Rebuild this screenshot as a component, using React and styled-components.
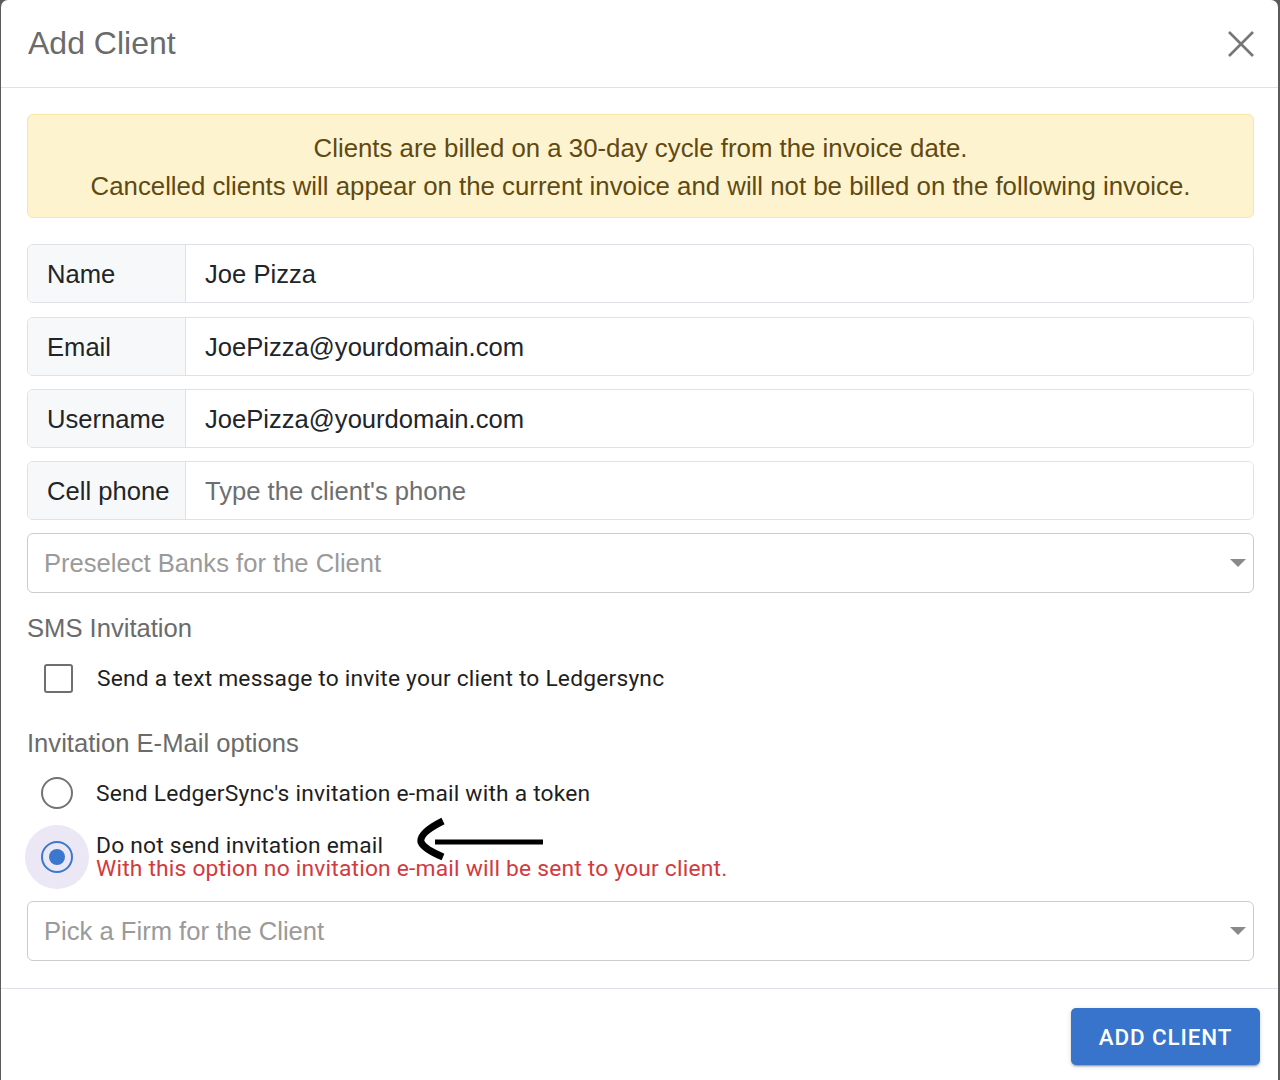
import React from 'react'
import styled, { createGlobalStyle } from 'styled-components'

const GlobalStyle = createGlobalStyle`
  html, body {
    margin: 0;
    padding: 0;
    background: #5b5b5b;
    overflow: hidden;
  }
  * { box-sizing: border-box; }
`

const fields = [
  { label: 'Name', value: 'Joe Pizza' },
  { label: 'Email', value: 'JoePizza@yourdomain.com' },
  { label: 'Username', value: 'JoePizza@yourdomain.com' },
  { label: 'Cell phone', value: '', placeholder: "Type the client's phone" },
]

const CloseIcon = () => (
  <svg width="28" height="28" viewBox="0 0 28 28">
    <path d="M2 2 L26 26 M26 2 L2 26" stroke="#767676" strokeWidth="2.6" fill="none" />
  </svg>
)

const Caret = () => (
  <svg width="16" height="8" viewBox="0 0 16 8">
    <path d="M0 0 H16 L8 8 Z" fill="#8a8a8a" />
  </svg>
)

const Arrow = () => (
  <ArrowSvg width="134" height="46" viewBox="0 0 134 46">
    <path d="M28 5 Q4 17 6 26 Q9 33 28 41" stroke="#000" strokeWidth="7" fill="none" />
    <path d="M20 26 H128" stroke="#000" strokeWidth="5" fill="none" />
  </ArrowSvg>
)

const App = () => {
  return (
    <>
      <GlobalStyle />
      <Modal>
        <Header>
          <Title>Add Client</Title>
          <CloseButton><CloseIcon /></CloseButton>
        </Header>
        <Body>
          <Alert>
            Clients are billed on a 30-day cycle from the invoice date.
            <br />
            Cancelled clients will appear on the current invoice and will not be billed on the following invoice.
          </Alert>
          <Fields>
            {fields.map((f) => (
              <InputGroup key={f.label}>
                <GroupLabel>{f.label}</GroupLabel>
                <GroupInput defaultValue={f.value} placeholder={f.placeholder} />
              </InputGroup>
            ))}
          </Fields>
          <Select $mt={13}>
            <Placeholder>Preselect Banks for the Client</Placeholder>
            <Caret />
          </Select>
          <SectionTitle $mt={20}>SMS Invitation</SectionTitle>
          <CheckRow>
            <CheckBox />
            <CheckLabel>Send a text message to invite your client to Ledgersync</CheckLabel>
          </CheckRow>
          <SectionTitle $mt={31}>Invitation E-Mail options</SectionTitle>
          <Radios>
            <RadioRow>
              <RadioControl>
                <RadioCircle />
              </RadioControl>
              <RadioLabel>Send LedgerSync's invitation e-mail with a token</RadioLabel>
            </RadioRow>
            <RadioRow>
              <RadioControl $focused>
                <RadioCircle $checked />
              </RadioControl>
              <RadioText>
                <RadioLabel>
                  Do not send invitation email
                  <Arrow />
                </RadioLabel>
                <HelperText>With this option no invitation e-mail will be sent to your client.</HelperText>
              </RadioText>
            </RadioRow>
          </Radios>
          <Select $mt={12}>
            <Placeholder>Pick a Firm for the Client</Placeholder>
            <Caret />
          </Select>
        </Body>
        <Footer>
          <PrimaryButton>Add Client</PrimaryButton>
        </Footer>
      </Modal>
    </>
  )
}

export default App

const Modal = styled.div`
  margin-left: 1px;
  width: 1277px;
  height: 1100px;
  background: #fff;
  border-radius: 7px 7px 0 0;
  font-family: "Liberation Sans", Arial, sans-serif;
  color: #212529;
`

const Header = styled.div`
  height: 88px;
  display: flex;
  align-items: center;
  justify-content: space-between;
  padding: 0 23px 0 27px;
  border-bottom: 1px solid #dee2e6;
`

const Title = styled.h1`
  margin: 0;
  font-size: 32px;
  font-weight: 500;
  color: #6b6b6b;
  line-height: 1.2;
`

const CloseButton = styled.button`
  border: none;
  background: none;
  padding: 0;
  display: flex;
  margin-top: 1px;
  cursor: pointer;
`

const Body = styled.div`
  padding: 26px 24px 27px 26px;
  display: flex;
  flex-direction: column;
`

const Alert = styled.div`
  background: #fef3cf;
  border: 1px solid #fbe5a3;
  border-radius: 6px;
  color: #5e4a13;
  text-align: center;
  font-size: 25.8px;
  line-height: 38.2px;
  padding: 14px 16px 12px;
`

const Fields = styled.div`
  margin-top: 26px;
  display: flex;
  flex-direction: column;
  gap: 13.3px;
`

const InputGroup = styled.div`
  display: flex;
  height: 59px;
  border: 1px solid #dee2e6;
  border-radius: 6px;
  overflow: hidden;
`

const GroupLabel = styled.div`
  width: 158px;
  flex-shrink: 0;
  display: flex;
  align-items: center;
  padding-left: 19px;
  padding-top: 2px;
  background: #f7f8f9;
  border-right: 1px solid #dee2e6;
  font-size: 25.6px;
  color: #212529;
`

const GroupInput = styled.input`
  flex: 1;
  border: none;
  outline: none;
  padding: 2px 19px 0;
  font-family: inherit;
  font-size: 25.6px;
  color: #212529;
  background: #fff;
  &::placeholder {
    color: #6c6f72;
  }
`

const Select = styled.div`
  margin-top: ${(p) => p.$mt}px;
  height: 60px;
  border: 1px solid #cccccc;
  border-radius: 6px;
  display: flex;
  align-items: center;
  justify-content: space-between;
  padding: 0 7px 0 16px;
`

const Placeholder = styled.span`
  font-size: 25.6px;
  color: #9a9a9a;
`

const SectionTitle = styled.div`
  margin-top: ${(p) => p.$mt}px;
  font-size: 25.6px;
  line-height: 30px;
  color: #6b6b6b;
`

const CheckRow = styled.label`
  margin-top: 16px;
  height: 38px;
  display: flex;
  align-items: center;
`

const CheckBox = styled.span`
  width: 29px;
  height: 29px;
  margin-left: 17px;
  border: 2.6px solid #6f6f6f;
  border-radius: 3px;
`

const CheckLabel = styled.span`
  margin-left: 24px;
  font-family: Roboto, "Noto Sans", sans-serif;
  font-size: 22.8px;
  letter-spacing: 0.2px;
  color: #1f1f1f;
`

const Radios = styled.div`
  margin-top: 3px;
  display: flex;
  flex-direction: column;
  margin-left: -2px;
`

const RadioRow = styled.label`
  display: flex;
  align-items: center;
  height: 64px;
`

const RadioControl = styled.span`
  width: 64px;
  height: 64px;
  border-radius: 50%;
  flex-shrink: 0;
  display: flex;
  align-items: center;
  justify-content: center;
  background: ${(p) => (p.$focused ? '#ece7f4' : 'transparent')};
`

const RadioCircle = styled.span`
  width: 32px;
  height: 32px;
  border-radius: 50%;
  border: 2.8px solid ${(p) => (p.$checked ? '#3a78d0' : '#737373')};
  display: flex;
  align-items: center;
  justify-content: center;
  &::after {
    content: '';
    display: ${(p) => (p.$checked ? 'block' : 'none')};
    width: 16px;
    height: 16px;
    border-radius: 50%;
    background: #3a78d0;
  }
`

const RadioText = styled.div`
  display: flex;
  flex-direction: column;
  padding-bottom: 1px;
`

const RadioLabel = styled.span`
  position: relative;
  margin-left: 7px;
  font-family: Roboto, "Noto Sans", sans-serif;
  font-size: 22.8px;
  line-height: 23px;
  letter-spacing: 0.2px;
  color: #1f1f1f;
`

const HelperText = styled.span`
  margin-left: 7px;
  font-family: Roboto, "Noto Sans", sans-serif;
  font-size: 22.8px;
  line-height: 23px;
  letter-spacing: 0.2px;
  color: #d23a40;
`

const ArrowSvg = styled.svg`
  position: absolute;
  left: 319px;
  top: -18px;
`

const Footer = styled.div`
  border-top: 1px solid #dee2e6;
  display: flex;
  justify-content: flex-end;
  padding: 19px 18px 0 0;
`

const PrimaryButton = styled.button`
  width: 189px;
  height: 57px;
  border: none;
  border-radius: 5px;
  background: #3874cb;
  color: #fff;
  font-family: Roboto, "Noto Sans", sans-serif;
  font-weight: 500;
  font-size: 22.4px;
  letter-spacing: 0.9px;
  text-transform: uppercase;
  box-shadow: 0 3px 1px -2px rgba(0, 0, 0, 0.2), 0 2px 2px 0 rgba(0, 0, 0, 0.14), 0 1px 5px 0 rgba(0, 0, 0, 0.12);
  cursor: pointer;
`
